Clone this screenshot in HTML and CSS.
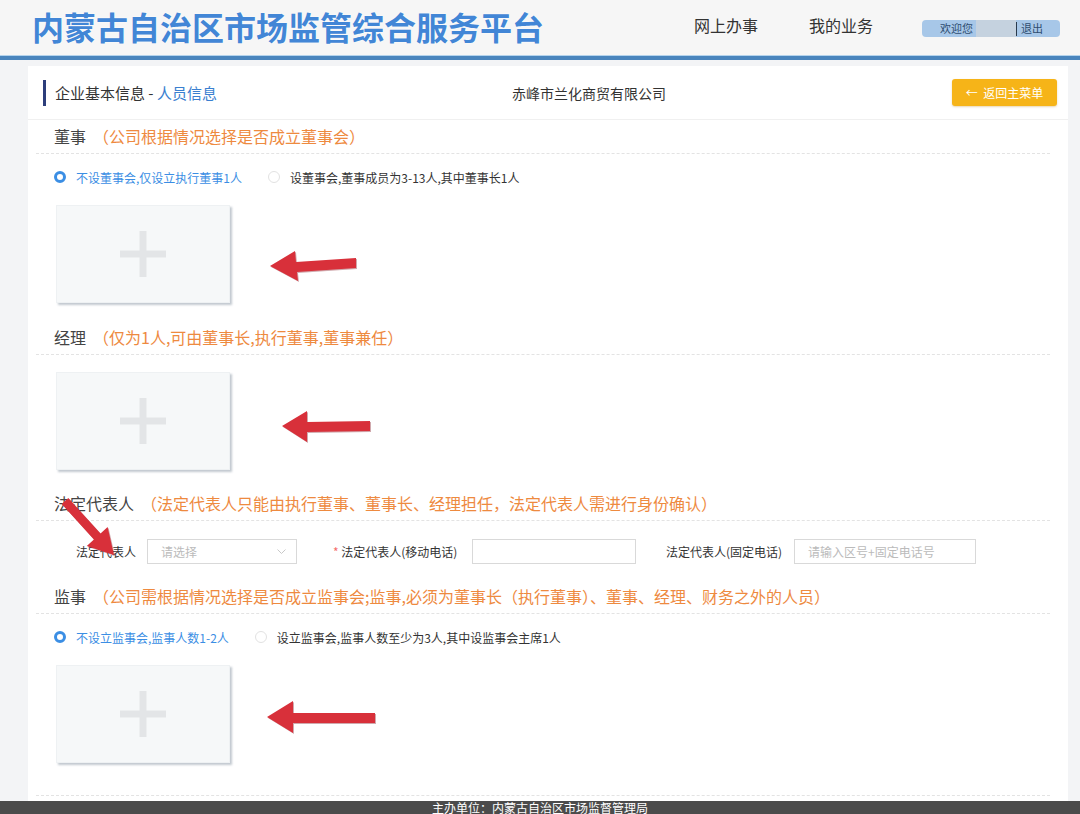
FILE: index.html
```html
<!DOCTYPE html>
<html lang="zh-CN">
<head>
<meta charset="utf-8">
<title>人员信息</title>
<link rel="stylesheet" href="styles.css">
</head>
<body>
<header class="topbar">
  <div class="brand">内蒙古自治区市场监管综合服务平台</div>
  <nav class="nav"><a>网上办事</a><a>我的业务</a></nav>
  <div class="user"><span class="welcome">欢迎您</span><span class="blur"></span><span class="sep"></span><span class="logout">退出</span></div>
</header>

<main class="panel">
  <div class="panel-head">
    <div class="crumb">企业基本信息 - <span class="accent">人员信息</span></div>
    <div class="company">赤峰市兰化商贸有限公司</div>
    <button class="back">←&nbsp; 返回主菜单</button>
  </div>

  <div class="form">
    <section class="sec">
      <h3 class="sec-title">董事<span class="hint">（公司根据情况选择是否成立董事会）</span></h3>
      <div class="radios">
        <label class="radio on"><span class="dot"></span>不设董事会,仅设立执行董事1人</label>
        <label class="radio"><span class="dot"></span>设董事会,董事成员为3-13人,其中董事长1人</label>
      </div>
      <div class="upload-row">
        <div class="upload"><svg width="46" height="46" viewBox="0 0 46 46"><rect x="19.5" y="0" width="7" height="46" fill="#e3e5e7"/><rect x="0" y="19.5" width="46" height="7" fill="#e3e5e7"/></svg></div>
        <svg class="arrow a1" width="90" height="36" viewBox="0 0 90 36"><polygon points="2,18 27,3 28,14 88,10 88,20 29,24 30,33" fill="#d8303a"/></svg>
      </div>
    </section>

    <section class="sec s2">
      <h3 class="sec-title">经理<span class="hint">（仅为1人,可由董事长,执行董事,董事兼任）</span></h3>
      <div class="upload-row r2">
        <div class="upload"><svg width="46" height="46" viewBox="0 0 46 46"><rect x="19.5" y="0" width="7" height="46" fill="#e3e5e7"/><rect x="0" y="19.5" width="46" height="7" fill="#e3e5e7"/></svg></div>
        <svg class="arrow a2" width="92" height="36" viewBox="0 0 92 36"><polygon points="2,17 27,2 27,13 90,12 90,22 27,23 27,33" fill="#d8303a"/></svg>
      </div>
    </section>

    <section class="sec s3">
      <h3 class="sec-title">法定代表人<span class="hint">（法定代表人只能由执行董事、董事长、经理担任，法定代表人需进行身份确认）</span></h3>
      <div class="field-row">
        <label class="flabel">法定代表人</label>
        <div class="select"><span class="ph">请选择</span><svg width="9" height="6" viewBox="0 0 9 6"><polyline points="0.5,0.5 4.5,4.5 8.5,0.5" fill="none" stroke="#c8c8c8" stroke-width="1"/></svg></div>
        <label class="flabel l2"><span class="star">*</span> 法定代表人(移动电话)</label>
        <input class="inp i1" type="text">
        <label class="flabel l3">法定代表人(固定电话)</label>
        <input class="inp i2" type="text" placeholder="请输入区号+固定电话号">
      </div>
      <svg class="diag" width="64" height="70" viewBox="0 0 64 70"><polygon points="5.7,13 12.3,7 44.5,42.5 51.6,36.1 58,64 30.8,54.9 37.9,48.5" fill="#d8303a"/></svg>
    </section>

    <section class="sec s4">
      <h3 class="sec-title">监事<span class="hint">（公司需根据情况选择是否成立监事会;监事,必须为董事长（执行董事）、董事、经理、财务之外的人员）</span></h3>
      <div class="radios">
        <label class="radio on"><span class="dot"></span>不设立监事会,监事人数1-2人</label>
        <label class="radio"><span class="dot"></span>设立监事会,监事人数至少为3人,其中设监事会主席1人</label>
      </div>
      <div class="upload-row">
        <div class="upload"><svg width="46" height="46" viewBox="0 0 46 46"><rect x="19.5" y="0" width="7" height="46" fill="#e3e5e7"/><rect x="0" y="19.5" width="46" height="7" fill="#e3e5e7"/></svg></div>
        <svg class="arrow a3" width="112" height="36" viewBox="0 0 112 36"><polygon points="2,18 28,2 28,14 110,14 110,24 28,24 28,34" fill="#d8303a"/></svg>
      </div>
    </section>
    <div class="end-line"></div>
  </div>
</main>

<footer class="footer">主办单位：内蒙古自治区市场监督管理局</footer>
</body>
</html>
```

FILE: styles.css
```css
* { box-sizing: border-box; }
html, body { margin: 0; padding: 0; }
body {
  width: 1080px;
  height: 814px;
  overflow: hidden;
  background: #f3f4f6;
  color: #333;
  font-family: "Noto Sans CJK SC", "Noto Sans", sans-serif;
}

/* header */
.topbar {
  height: 60px;
  display: flex;
  align-items: flex-start;
  background: #f6f6f6;
  border-bottom: 4px solid #4a85bd;
  box-shadow: inset 0 -1px 0 #b4d3ec;
}
.brand {
  margin: 10px 0 0 32px;
  font-size: 32px;
  line-height: 32px;
  font-weight: 700;
  color: #4286d6;
  text-shadow: 0 0 2px #fff;
  white-space: nowrap;
}
.nav {
  display: flex;
  gap: 51px;
  margin: 14px 0 0 150px;
}
.nav a {
  font-size: 16px;
  line-height: 22px;
  color: #333;
}
.user {
  margin: 20px 0 0 49px;
  width: 138px;
  height: 17px;
  border-radius: 4px;
  background: #a7c7e8;
  display: flex;
  align-items: center;
  padding-left: 18px;
  font-size: 11px;
  color: #2f4d70;
}
.welcome { line-height: 17px; }
.blur {
  width: 40px;
  height: 17px;
  margin-left: 3px;
  background: #c5d2df;
}
.sep {
  width: 1px;
  height: 14px;
  background: #2a3a4c;
}
.logout { margin-left: 4px; line-height: 17px; }

/* panel */
.panel {
  margin: 6px 0 0 28px;
  width: 1040px;
  height: 735px;
  background: #fff;
}
.panel-head {
  height: 54px;
  display: flex;
  align-items: center;
  padding-left: 15px;
  border-bottom: 1px solid #f0f0f0;
}
.crumb {
  width: 469px;
  height: 26px;
  line-height: 26px;
  border-left: 3px solid #2d3e7b;
  padding-left: 9px;
  font-size: 15px;
  color: #333;
}
.accent { color: #3a7fd0; }
.company { font-size: 14px; color: #333; }
.back {
  margin-left: auto;
  margin-right: 11px;
  width: 105px;
  height: 27px;
  border: none;
  border-radius: 3px;
  background: #f6b418;
  color: #fff;
  font-family: inherit;
  font-size: 12px;
  box-shadow: 0 1px 2px rgba(180,120,0,.3);
}

.form { padding: 0 18px 0 8px; }
.sec { position: relative; }
.sec-title {
  margin: 0;
  padding: 5px 0 6px 18px;
  font-size: 16px;
  line-height: 22px;
  font-weight: 400;
  color: #444;
  border-bottom: 1px dashed #e3e3e3;
  white-space: nowrap;
}
.hint { color: #ee8a3f; margin-left: 7px; }
.s2 { margin-top: 18px; }
.s3 { margin-top: 17px; }
.s4 { margin-top: 16px; }

.radios {
  margin-top: 13px;
  height: 20px;
  display: flex;
  align-items: center;
  padding-left: 18px;
  font-size: 12px;
}
.radio {
  display: flex;
  align-items: center;
  color: #333;
  margin-right: 26px;
}
.radio .dot {
  width: 12px;
  height: 12px;
  border-radius: 50%;
  border: 1px solid #e2e2e2;
  margin-right: 10px;
  background: #fff;
}
.radio.on { color: #3b8ee4; }
.radio.on .dot {
  border: 3px solid #3b8ee4;
  background: #fff;
}

.upload-row {
  margin-top: 18px;
  padding-left: 20px;
  display: flex;
  align-items: flex-start;
}
.r2 { margin-top: 17px; }
.upload {
  width: 174px;
  height: 98px;
  background: #f6f8f9;
  border: 1px solid #eef1f3;
  box-shadow: 2px 2px 2px rgba(80,100,120,.35);
  display: flex;
  align-items: center;
  justify-content: center;
}
.arrow { filter: drop-shadow(1px 1px 0 rgba(120,10,20,.35)); }
.a1 { margin: 43px 0 0 38px; }
.a2 { margin: 37px 0 0 50px; }
.a3 { margin: 34px 0 0 35px; }

.field-row {
  margin-top: 18px;
  padding-left: 40px;
  display: flex;
  align-items: center;
  height: 25px;
  font-size: 12px;
}
.flabel { color: #333; white-space: nowrap; }
.star { color: #f56c6c; }
.select {
  margin-left: 11px;
  width: 150px;
  height: 25px;
  border: 1px solid #d9d9d9;
  display: flex;
  align-items: center;
  justify-content: space-between;
  padding: 0 10px 0 13px;
}
.ph { color: #bbb; }
.l2 { margin-left: 36px; width: 128px; }
.l3 { margin-left: 30px; width: 117px; }
.inp {
  margin-left: 11px;
  height: 25px;
  border: 1px solid #d9d9d9;
  padding: 0 13px;
  font-family: inherit;
  font-size: 12px;
  outline: none;
}
.inp::placeholder { color: #bbb; }
.i1 { width: 164px; }
.i2 { width: 182px; }

.diag {
  position: absolute;
  left: 20px;
  top: 4px;
  filter: drop-shadow(1px 1px 0 rgba(120,10,20,.35));
}

.end-line {
  margin-top: 32px;
  border-bottom: 1px dashed #e3e3e3;
}

.footer {
  height: 13px;
  background: #4b4b4b;
  color: #fff;
  font-size: 12px;
  line-height: 13px;
  text-align: center;
  overflow: visible;
}
```
